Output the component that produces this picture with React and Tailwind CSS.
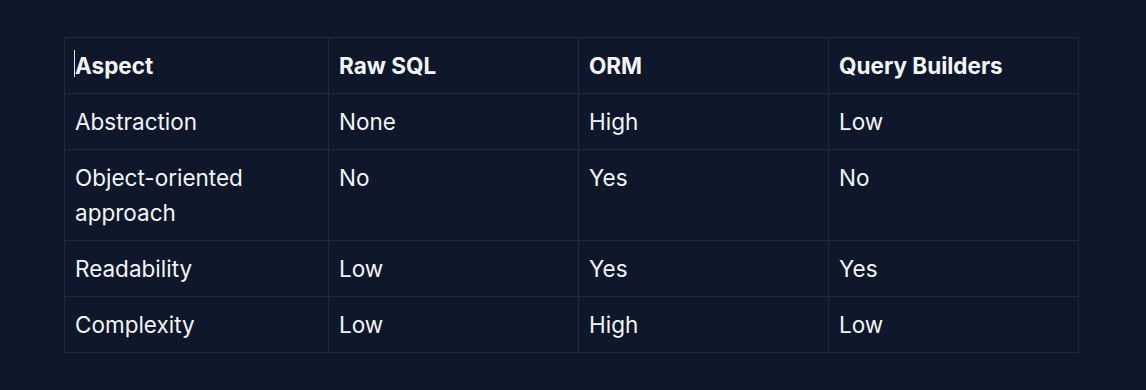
export default function App() {
  const rows = [
    ["Abstraction", "None", "High", "Low"],
    ["Object-oriented approach", "No", "Yes", "No"],
    ["Readability", "Low", "Yes", "Yes"],
    ["Complexity", "Low", "High", "Low"],
  ];
  return (
    <div className="w-[1146px] h-[390px] bg-[#0f172a] pt-[37px] pl-[64px]" style={{ fontFamily: "Inter, 'Noto Sans', sans-serif" }}>
      <table className="border-collapse text-[22.5px] leading-[35px] text-[#f1f5f9] table-fixed w-[1014px]">
        <colgroup>
          <col className="w-[264px]" />
          <col className="w-[250px]" />
          <col className="w-[250px]" />
          <col className="w-[250px]" />
        </colgroup>
        <thead>
          <tr>
            {["Aspect", "Raw SQL", "ORM", "Query Builders"].map((h, i) => (
              <th key={h} className="border border-[#1e293b] px-[10px] py-[10px] text-left align-top font-bold">
                <span className="relative">
                  {i === 0 && <span className="absolute left-[-1px] top-[-2px] w-px h-[27px] bg-[#e5e7eb]" />}
                  {h}
                </span>
              </th>
            ))}
          </tr>
        </thead>
        <tbody>
          {rows.map((r) => (
            <tr key={r[0]}>
              {r.map((c, i) => (
                <td key={i} className="border border-[#1e293b] px-[10px] py-[10px] align-top">{c}</td>
              ))}
            </tr>
          ))}
        </tbody>
      </table>
    </div>
  );
}
